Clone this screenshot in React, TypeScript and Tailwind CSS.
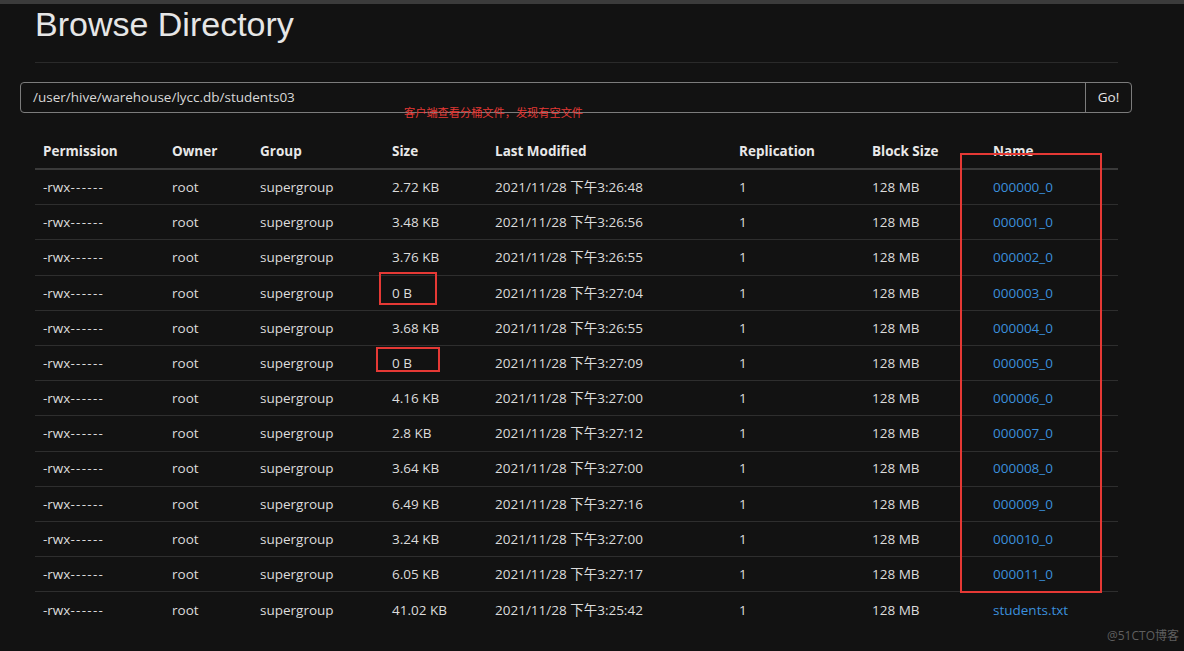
import React from "react";

const font = {
  fontFamily: '"Open Sans", "Noto Sans CJK SC", sans-serif',
};

const rows: [string, string][] = [
  ["2.72 KB", "2021/11/28 下午3:26:48"],
  ["3.48 KB", "2021/11/28 下午3:26:56"],
  ["3.76 KB", "2021/11/28 下午3:26:55"],
  ["0 B", "2021/11/28 下午3:27:04"],
  ["3.68 KB", "2021/11/28 下午3:26:55"],
  ["0 B", "2021/11/28 下午3:27:09"],
  ["4.16 KB", "2021/11/28 下午3:27:00"],
  ["2.8 KB", "2021/11/28 下午3:27:12"],
  ["3.64 KB", "2021/11/28 下午3:27:00"],
  ["6.49 KB", "2021/11/28 下午3:27:16"],
  ["3.24 KB", "2021/11/28 下午3:27:00"],
  ["6.05 KB", "2021/11/28 下午3:27:17"],
  ["41.02 KB", "2021/11/28 下午3:25:42"],
];

const cols = "grid grid-cols-[129px_88px_132px_103px_244px_133px_121px_133px]";

export default function App() {
  return (
    <div className="relative h-[651px] w-[1184px] overflow-hidden bg-[#121212] text-[#dcdcdc]" style={font}>
      <div className="h-[4px] bg-[#3b3b3b]" />

      <h1
        className="ml-[35px] text-[34px] leading-[40px] text-[#e6e6e6]"
        style={{ fontFamily: '"Liberation Sans", Arial, sans-serif' }}
      >
        Browse Directory
      </h1>
      <div className="ml-[35px] mt-[18px] h-px w-[1083px] bg-[#2a2a2a]" />

      {/* path input */}
      <div className="ml-[20px] mt-[19px] flex h-[31px] w-[1112px] rounded-[4px] border border-[#7c7c7c] text-[13.5px]">
        <div className="flex flex-1 items-center pl-[12px] text-[#d8d8d8]">/user/hive/warehouse/lycc.db/students03</div>
        <div className="flex w-[46px] items-center justify-center border-l border-[#7c7c7c] text-[#e6e6e6]">Go!</div>
      </div>

      {/* table */}
      <div className="ml-[35px] mt-[22px] w-[1083px] text-[13.5px]">
        <div className={`${cols} h-[35px] items-center border-b-2 border-[#3a3a3a] font-bold text-[#e8e8e8]`}>
          <div className="px-2">Permission</div>
          <div className="px-2">Owner</div>
          <div className="px-2">Group</div>
          <div className="px-2">Size</div>
          <div className="px-2">Last Modified</div>
          <div className="px-2">Replication</div>
          <div className="px-2">Block Size</div>
          <div className="px-2">Name</div>
        </div>
        {rows.map(([size, date], i) => (
          <div
            key={i}
            className={`${cols} h-[35.2px] items-center ${i < rows.length - 1 ? "border-b border-[#2e2e2e]" : ""}`}
          >
            <div className="px-2">
              -rwx<span className="tracking-[1.3px]">------</span>
            </div>
            <div className="px-2">root</div>
            <div className="px-2">supergroup</div>
            <div className="px-2">{size}</div>
            <div className="px-2">{date}</div>
            <div className="px-2">1</div>
            <div className="px-2">128 MB</div>
            <div className="px-2 text-[#3b8fdc]">
              {i < 12 ? `0000${String(i).padStart(2, "0")}_0` : "students.txt"}
            </div>
          </div>
        ))}
      </div>

      {/* annotations */}
      <div className="absolute left-[404px] top-[105px] text-[11.2px] leading-[16px] text-[#e53935]">
        客户端查看分桶文件，发现有空文件
      </div>
      <div className="absolute left-[960px] top-[153px] h-[440px] w-[142px] border-2 border-[#e53935]" />
      <div className="absolute left-[379px] top-[272px] h-[33px] w-[58px] border-2 border-[#e53935]" />
      <div className="absolute left-[376px] top-[347px] h-[25px] w-[64px] border-2 border-[#e53935]" />

      <div className="absolute left-[1107px] top-[628px] text-[12px] leading-[16px] text-[#5f5f5f]">@51CTO博客</div>
    </div>
  );
}
